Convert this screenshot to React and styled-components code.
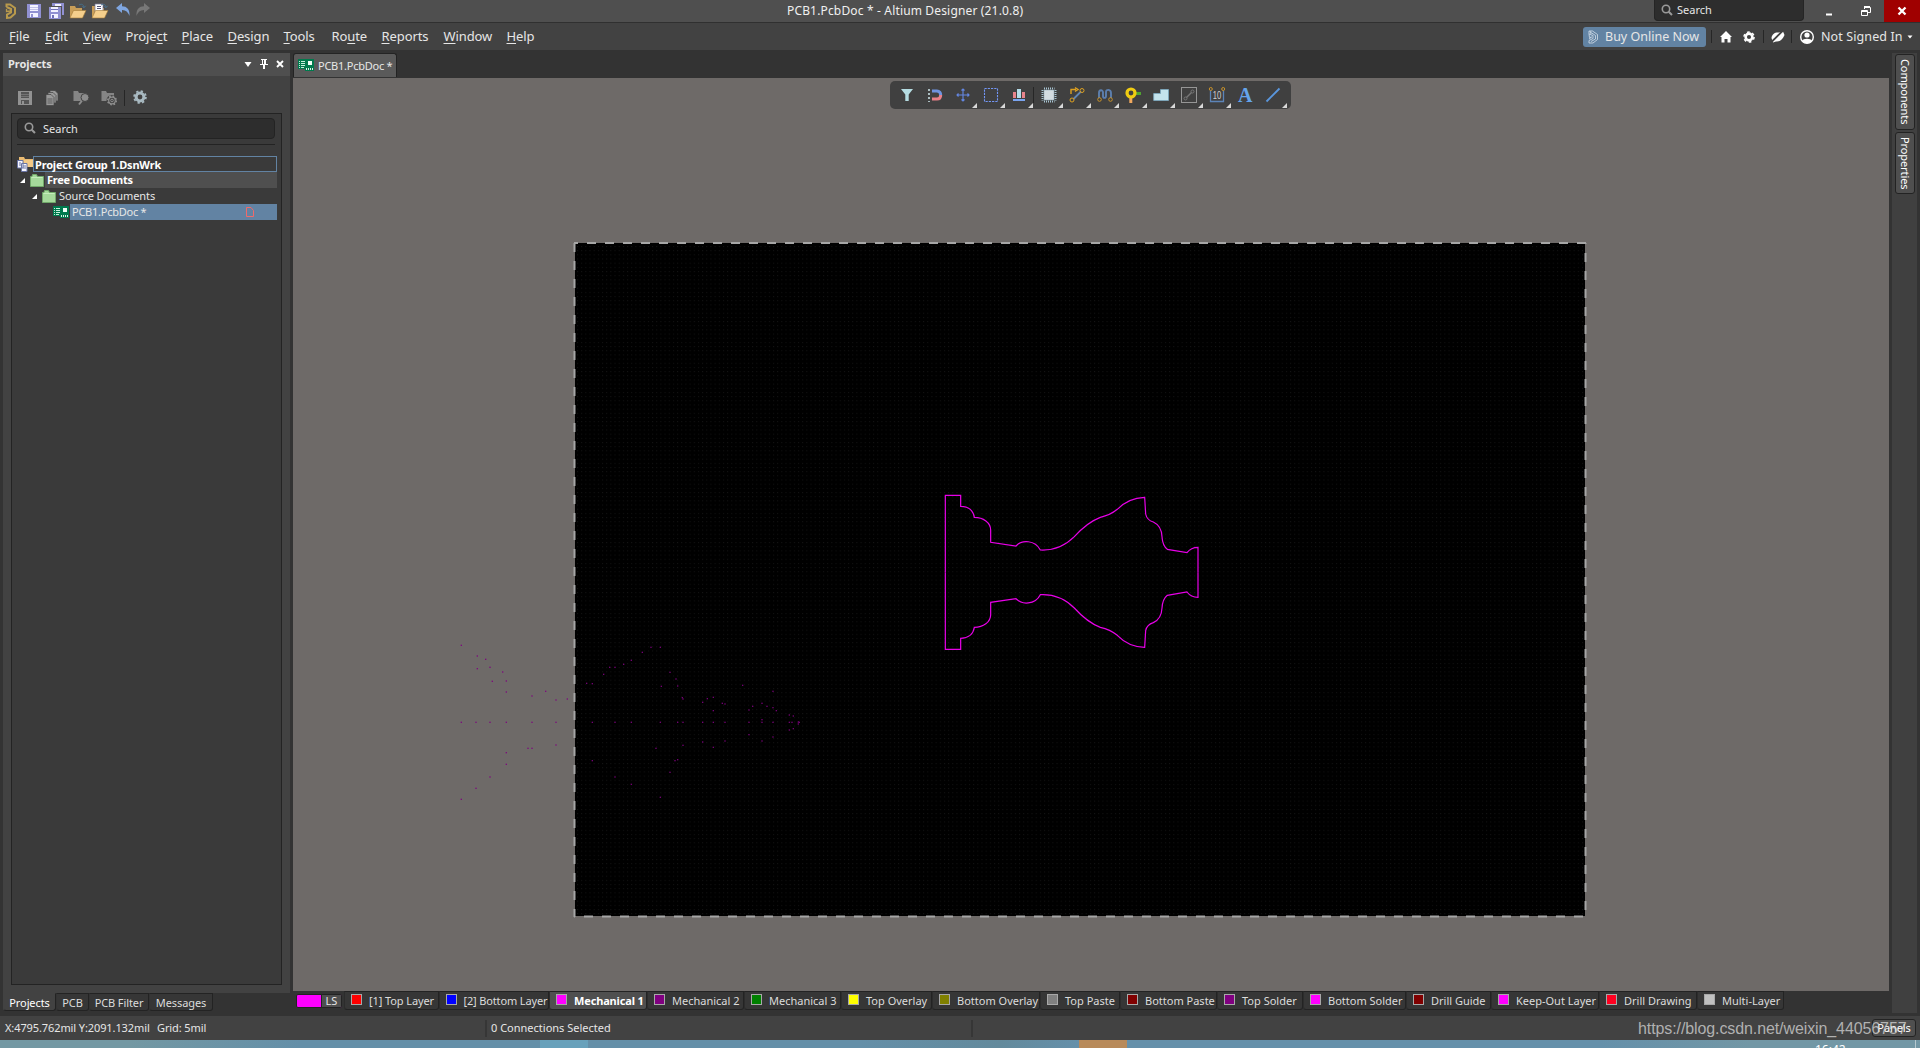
import { Fragment } from "react";
import styled, { createGlobalStyle } from "styled-components";

const GlobalStyle = createGlobalStyle`
  * {
    box-sizing: border-box;
  }
  body {
    margin: 0;
    overflow: hidden;
    background-color: #333333;
    color: #e6e6e6;
    font-family: "Noto Sans", "Open Sans", sans-serif;
    font-size: 11px;
  }
  svg {
    display: block;
    flex: none;
    overflow: visible;
  }
`;

const Window = styled.div`
  width: 1920px;
  height: 1048px;
  display: flex;
  flex-direction: column;
  overflow: hidden;
  white-space: nowrap;
`;

/* ---------- title bar ---------- */

const TitleBar = styled.div`
  height: 23px;
  flex: none;
  display: grid;
  grid-template-columns: 787px 1fr 266px;
  background-color: #4f4f4f;
  border-bottom: 1px solid #303030;
`;

const QuickAccess = styled.div`
  display: flex;
  align-items: center;
`;

const WindowTitle = styled.div`
  font-size: 12px;
  line-height: 22px;
  letter-spacing: 0.16px;
  color: #f0f0f0;
`;

const WindowControls = styled.div`
  display: flex;
`;

const TopSearch = styled.div`
  width: 150px;
  height: 21px;
  display: flex;
  align-items: center;
  gap: 4px;
  padding-left: 6px;
  padding-bottom: 1px;
  background-color: #2d2d2d;
  border: 1px solid #252525;
  border-top: none;
  border-radius: 0 0 4px 4px;
`;

const ControlButton = styled.div`
  width: ${props => props.$w}px;
  height: 22px;
  margin-left: ${props => props.$ml || 0}px;
  display: flex;
  align-items: center;
  justify-content: center;
  background-color: ${props => props.$danger ? "#a00000" : "transparent"};
`;

/* ---------- menu ---------- */

const MenuBar = styled.div`
  height: 27px;
  flex: none;
  display: flex;
  align-items: center;
  background-color: #424242;
`;

const MenuItem = styled.div`
  width: ${props => props.$w}px;
  font-size: 13px;
  letter-spacing: -0.1px;
  line-height: 26px;

  u {
    text-underline-offset: 2px;
  }
`;

const Menus = styled.div`
  display: flex;
  flex: 1;
  padding-left: 9px;
  margin-top: -1px;
`;

const Account = styled.div`
  display: flex;
  align-items: center;
  width: 337px;
  font-size: 12.5px;
  letter-spacing: 0.1px;
`;

const BuyButton = styled.div`
  width: 123px;
  height: 20px;
  display: flex;
  align-items: center;
  gap: 6px;
  padding-left: 5px;
  margin-right: 5px;
  letter-spacing: 0;
  background-color: #6283a3;
  border-radius: 3px;
`;

const Divider = styled.div`
  width: 1px;
  height: ${props => props.$h || 13}px;
  flex: none;
  background-color: #262626;
`;

const IconSlot = styled.div`
  width: ${props => props.$w}px;
  flex: none;
  display: flex;
  justify-content: center;
`;

/* ---------- body ---------- */

const Body = styled.div`
  height: 966px;
  flex: none;
  display: flex;
  padding: 3px 3px 0 3px;
  background-color: #333333;
`;

const Panel = styled.div`
  width: 287px;
  margin-right: 3px;
  display: flex;
  flex-direction: column;
`;

const PanelHeader = styled.div`
  height: 23px;
  display: flex;
  align-items: center;
  padding: 0 2px 1px 5px;
  background-color: #4f4f4f;
  font-weight: 700;
  letter-spacing: -0.05px;

  span {
    flex: 1;
    margin-top: -1px;
  }
`;

const HeaderIcon = styled.div`
  width: 16px;
  display: flex;
  justify-content: center;
`;

const PanelBody = styled.div`
  height: 917px;
  padding: 8px 8px 0 8px;
  background-color: #424242;
`;

const PanelTools = styled.div`
  height: 29px;
  display: flex;
  align-items: flex-start;
  padding: 6px 0 0 6px;
`;

const PanelTool = styled.div`
  width: ${props => props.$w || 28}px;
  display: flex;
`;

const TreeBox = styled.div`
  width: 271px;
  height: 872px;
  padding: 4px 4px 4px 5px;
  background-color: #3a3a3a;
  border: 1px solid #232323;
`;

const PanelSearch = styled.div`
  width: 258px;
  height: 21px;
  display: flex;
  align-items: center;
  gap: 7px;
  padding-left: 6px;
  padding-bottom: 1px;
  background-color: #2d2d2d;
  border: 1px solid #232323;
  border-radius: 4px;
`;

const Rule = styled.div`
  width: 258px;
  height: 1px;
  margin: 5px 0 11px;
  background-color: #232323;
`;

const TreeRow = styled.div`
  height: 16px;
  display: flex;
  align-items: center;
  padding-left: ${props => props.$indent}px;
`;

const TreeLabel = styled.div`
  flex: 1;
  height: 16px;
  display: flex;
  align-items: center;
  justify-content: space-between;
  padding-left: 2px;
  padding-right: 23px;
  padding-bottom: 1px;
  margin-left: 1px;
  font-weight: ${props => props.$bold ? 700 : 400};
  letter-spacing: ${props => props.$spacing || "-0.2px"};
  color: ${props => props.$bold ? "#ffffff" : "#e6e6e6"};
  background-color: ${props => props.$bg || "transparent"};
  ${props => props.$outlined && "border: 1px solid #6283a3; padding: 0 0 0 1px; margin-left: 0;"}
`;

const PanelTabs = styled.div`
  display: flex;
`;

const PanelTab = styled.div`
  width: ${props => props.$w}px;
  height: 18px;
  text-align: center;
  line-height: 17px;
  letter-spacing: -0.1px;
  border: 1px solid #232323;
  border-top-color: ${props => props.$active ? "#424242" : "#232323"};
  border-left-color: ${props => props.$active ? "#424242" : "#333333"};
  border-radius: 0 0 3px 3px;
  color: ${props => props.$active ? "#ffffff" : "#dcdcdc"};
  background-color: ${props => props.$active ? "#424242" : "#363636"};
`;

/* ---------- editor ---------- */

const Editor = styled.div`
  width: 1596px;
  display: flex;
  flex-direction: column;
`;

const DocumentTab = styled.div`
  width: 104px;
  height: 24px;
  margin-bottom: 1px;
  display: flex;
  align-items: center;
  gap: 4px;
  padding-left: 4px;
  padding-bottom: 1px;
  letter-spacing: -0.25px;
  background-color: #5a5a5a;
  border: 1px solid #232323;
  border-bottom: none;
  border-radius: 3px 3px 0 0;
`;

const Canvas = styled.div`
  position: relative;
  height: 913px;
  background-color: #6e6a68;
`;

const Toolbar = styled.div`
  position: absolute;
  left: 597px;
  top: 3px;
  width: 401px;
  height: 28px;
  display: flex;
  align-items: center;
  padding-left: 3px;
  background-color: #404040;
  border-radius: 5px;
`;

const ToolSlot = styled.div`
  position: relative;
  width: 28.1px;
  height: 28px;
  display: flex;
  align-items: center;
  justify-content: center;
  padding-bottom: 1px;

  ${props => props.$menu && `
    &::after {
      content: "";
      position: absolute;
      right: 0;
      bottom: 1px;
      border-left: 5px solid transparent;
      border-bottom: 5px solid #d8d8d8;
    }
  `}
`;

const TextGlyph = styled.div`
  font-family: "Liberation Serif", "Times New Roman", serif;
  font-size: 20px;
  font-weight: 700;
  line-height: 22px;
  color: #64a4ea;
`;

const LayerBar = styled.div`
  display: flex;
  height: 19px;
  padding-left: 3px;
`;

const LayerSet = styled.div`
  width: 46px;
  height: 14px;
  margin: 3px 2px 0 0;
  display: flex;
  border: 1px solid #232323;
  background-color: #ff00ff;
  border-radius: 2px;
`;

const LayerSetLabel = styled.div`
  margin-left: auto;
  width: 20px;
  text-align: center;
  line-height: 12px;
  border-left: 1px solid #232323;
  background-color: #4f4f4f;
`;

const LayerTab = styled.div`
  width: ${props => props.$w}px;
  height: 19px;
  display: flex;
  align-items: center;
  padding: 0 0 1px 6px;
  border: 1px solid #232323;
  border-left-color: #2c2c2c;
  border-radius: 0 0 3px 3px;
  font-weight: ${props => props.$active ? 700 : 400};
  letter-spacing: ${props => props.$spacing || "0"};
  color: ${props => props.$active ? "#ffffff" : "#dcdcdc"};
  background-color: ${props => props.$active ? "#4f4f4f" : "#363636"};
`;

const Swatch = styled.div`
  width: 11px;
  height: 11px;
  margin: 0 7px 2px 0;
  border: 1px solid #a8a8a8;
  background-color: ${props => props.$color};
`;

const SideDock = styled.div`
  width: 25px;
  height: 960px;
  margin-left: 3px;
  padding: 1px 0 0 3px;
  display: flex;
  flex-direction: column;
  gap: 2px;
  background-color: #404040;
`;

const SideTab = styled.div`
  width: 20px;
  height: ${props => props.$h}px;
  display: flex;
  align-items: center;
  justify-content: center;
  writing-mode: vertical-rl;
  line-height: 18px;
  letter-spacing: ${props => props.$spacing};
  color: #ffffff;
  background-color: #4f4f4f;
  border: 1px solid #232323;
  border-radius: 3px;
`;

/* ---------- status and taskbar ---------- */

const StatusBar = styled.div`
  position: relative;
  height: 24px;
  flex: none;
  display: flex;
  align-items: center;
  padding: 0 4px 0 5px;
  letter-spacing: -0.1px;
  background-color: #424242;
`;

const StatusCell = styled.div`
  width: ${props => props.$w}px;
  padding-bottom: 1px;
  padding-left: ${props => props.$pl || 0}px;
  letter-spacing: ${props => props.$spacing || "-0.1px"};
`;

const StatusRule = styled.div`
  width: 2px;
  height: 17px;
  background-color: #363636;
`;

const PanelsButton = styled.div`
  width: 44px;
  height: 18px;
  margin-left: auto;
  text-align: center;
  line-height: 16px;
  color: #ffffff;
  background-color: #4f4f4f;
  border: 1px solid #232323;
  border-radius: 3px;
`;

const Watermark = styled.div`
  position: absolute;
  left: 1638px;
  top: 2px;
  font-family: "Liberation Sans", Arial, sans-serif;
  font-size: 16px;
  line-height: 22px;
  color: rgba(215, 215, 215, 0.75);
`;

const TaskBar = styled.div`
  height: 8px;
  flex: none;
  display: flex;
  overflow: hidden;
  background: linear-gradient(90deg, #7398a3 0, #7398a3 130px, #648fa8 300px, #648fa8 860px, #638a9c 1000px, #6590aa 1080px, #6590aa 1600px, #7297a5 1750px, #7297a5 100%);
`;

const TaskItem = styled.div`
  width: 48px;
  height: 8px;
  margin-left: ${props => props.$ml}px;
  background-color: ${props => props.$color};
`;

const Clock = styled.div`
  width: 101px;
  height: 8px;
  margin-left: 688px;
  padding-top: 2px;
  font-size: 12px;
  line-height: 16px;
  color: #ffffff;
  border-right: 1px solid #b5c8cf;
`;

/* ---------- icons ---------- */

const SearchIcon = () => (
  <svg width="12" height="12" viewBox="0 0 12 12" fill="none" stroke="#9a9a9a">
    <circle cx="5" cy="5" r="3.7" strokeWidth="1.6" />
    <path d="M7.7 7.7 L11 11" strokeWidth="2" />
  </svg>
);

const AltiumIcon = () => (
  <svg width="12" height="16" viewBox="0 0 12 16" fill="none" stroke="#b99a4c" strokeWidth="2">
    <path d="M1.500 4V1.500H5L10 5V10.500L5.500 14.500L2 14.800V11.500L6 9.500V6L1.500 4" />
    <path d="M1.500 6V8.500L6 8" strokeWidth="1.300" />
  </svg>
);

const SaveIcon = ({ color = "#9191d2", paper = "#f3f3ff", size = 16 }) => (
  <svg width={size} height={size} viewBox="0 0 16 16" shapeRendering="crispEdges">
    <path d="M1 1H15V15H1Z" fill={color} />
    <path d="M4 2H12V8H4Z" fill={paper} />
    <path d="M4 4H12V5H4ZM4 6H12V7H4Z" fill={color} opacity="0.5" />
    <path d="M4 10H12V14H4Z" fill={paper} />
    <path d="M5 11H7V14H5Z" fill={color} />
  </svg>
);

const SaveAllIcon = () => (
  <svg width="18" height="18" viewBox="0 0 18 18" shapeRendering="crispEdges">
    <path d="M5 1H17V13H5Z" fill="#9191d2" />
    <path d="M8 2H14V4H8Z" fill="#f3f3ff" />
    <path d="M1 4H14V17H1Z" fill="#9191d2" stroke="#4f4f4f" />
    <path d="M4 5H11V10H4ZM4 12H11V16H4Z" fill="#f3f3ff" />
    <path d="M4 7H11V8H4ZM5 13H7V16H5Z" fill="#7070b8" />
  </svg>
);

const OpenIcon = ({ doc }) => (
  <svg width="18" height="16" viewBox="0 0 18 16">
    <path d="M1 14V3H6L7 5H13V14Z" fill="#c99e58" />
    {doc && <path d="M4 1H12V11H4Z" fill="#ffffff" stroke="#7a7a9a" strokeWidth="0.700" />}
    {doc && <path d="M6 3.500H10M6 5.500H10" stroke="#555577" />}
    <path d="M1 15L4.500 7.500H17L13.500 15Z" fill="#f5cf8c" stroke="#a57b35" strokeWidth="0.600" />
    <path d="M10 2C12.500 0.500 14.500 1.500 15 4M13.300 3.200L15 4.800L16.600 2.800" fill="none" stroke="#47708c" />
  </svg>
);

const ArrowIcon = ({ color, flip }) => (
  <svg width="20" height="18" viewBox="0 0 20 18">
    <path
      d="M3 6L9 1V4.200C14 4.200 17 7.500 16.500 14C15 10 13 8.200 9 8V11Z"
      fill={color}
      transform={flip ? "translate(20 0) scale(-1 1)" : undefined}
    />
  </svg>
);

const PcbIcon = () => (
  <svg width="16" height="12" viewBox="0 0 16 12" shapeRendering="crispEdges">
    <path d="M0 0H16V12H7V10H0Z" fill="#007a4d" />
    <path d="M1 2H2V3H1ZM1 4H2V5H1ZM1 6H2V7H1ZM1 8H2V9H1ZM3 2H7V3H3ZM3 4H7V5H3ZM3 6H7V7H3ZM3 8H6V9H3Z" fill="#c6eedb" />
    <path d="M10 2H14V6H10Z" fill="#f2fff8" />
    <path d="M8 9H9V11H8ZM10 9H11V11H10ZM12 9H13V11H12ZM14 9H15V11H14Z" fill="#d9f5e7" />
  </svg>
);

const DocsIcon = () => (
  <svg width="14" height="16" viewBox="0 0 14 16" fill="#9a9a9a" stroke="#424242" strokeWidth="0.700">
    <path d="M5 0.500H10L13 3.500V11H5Z" />
    <path d="M3 2.500H8L11 5.500V13H3Z" />
    <path d="M1 4.500H6L9 7.500V15.500H1Z" />
    <path d="M2.500 9H7.500M2.500 11H7.500M2.500 13H7.500" />
  </svg>
);

const FolderToolIcon = ({ gear }) => (
  <svg width="17" height="16" viewBox="0 0 17 16">
    <path d="M0.500 1H5L6 3H13V11H0.500Z" fill="#858585" />
    {gear ? (
      <g fill="none" stroke="#8f8f8f">
        <circle cx="11" cy="10.500" r="4.500" fill="#424242" stroke="#424242" strokeWidth="2" />
        <circle cx="11" cy="10.500" r="4.300" strokeWidth="1.500" strokeDasharray="1.700 1.677" />
        <circle cx="11" cy="10.500" r="3.300" strokeWidth="1.200" />
        <circle cx="11" cy="10.500" r="1.300" />
      </g>
    ) : (
      <g stroke="#424242">
        <path d="M9.500 10L6 14.500" stroke="#8d8d8d" strokeWidth="2" />
        <circle cx="12" cy="7.500" r="4" fill="#8d8d8d" />
      </g>
    )}
  </svg>
);

const GearIcon = ({ size, color, hole }) => (
  <svg width={size} height={size} viewBox="0 0 14 14" fill="none" stroke={color}>
    <circle cx="7" cy="7" r="3.900" strokeWidth="3" />
    <circle cx="7" cy="7" r="5.900" strokeWidth="1.800" strokeDasharray={hole ? "2.300 2.333" : "3.100 3.080"} />
  </svg>
);

const GroupIcon = () => (
  <svg width="16" height="16" viewBox="0 0 16 16">
    <path d="M2 1H7L8 3H16V11H2Z" fill="#e9ba72" />
    <path d="M7 4H16V11H7Z" fill="#f3c986" />
    <path d="M0.500 4.500H6V12H0.500ZM4.500 7.500H10V15.500H4.500Z" fill="#f6f6ff" stroke="#6a75a5" />
    <path d="M6 10H9M6 12H9M2 7H4M2 9H4" stroke="#6a75a5" />
  </svg>
);

const FolderIcon = () => (
  <svg width="14" height="13" viewBox="0 0 14 13">
    <path d="M0.500 12.500V2.500H2L2.500 0.500H6.500L7.500 2.500H13.500V12.500Z" fill="#a5d99b" stroke="#71a96a" />
    <path d="M1.500 3.500H12.500" stroke="#c4edbb" />
  </svg>
);

const Expander = styled.div`
  border-left: 5px solid transparent;
  border-bottom: 5px solid #ffffff;
  margin-right: 5px;
`;

const ModifiedIcon = () => (
  <svg width="8" height="10" viewBox="0 0 8 10" fill="none" stroke="#f06a6a">
    <path d="M0.500 0.500H5L7.500 3.500V9.500H0.500Z" />
  </svg>
);

const toolIcons = [
  { id: "filter", art: <path d="M2 2H14L9.700 7.500V14H6.300V7.500Z" fill="#b5dce2" /> },
  {
    id: "snap",
    art: (
      <g fill="none" strokeWidth="3">
        <path d="M5 4H10C12.500 4 13.700 6 13.700 8" stroke="#6f93e0" />
        <path d="M13.700 8C13.700 10.500 12.500 12 10 12H5" stroke="#e88088" />
        <path d="M2 2V15" stroke="#b8cdd0" strokeWidth="1.800" strokeDasharray="2 2" />
      </g>
    ),
  },
  { id: "origin", menu: true, art: <path d="M8 2V14M2 8H14M6.500 3.500L8 2L9.500 3.500M6.500 12.500L8 14L9.500 12.500M3.500 6.500L2 8L3.500 9.500M12.500 6.500L14 8L12.500 9.500" fill="none" stroke="#6488e4" strokeWidth="1.100" /> },
  { id: "select", menu: true, art: <rect x="1.500" y="1.500" width="13" height="13" fill="none" stroke="#7396f5" strokeWidth="1.100" strokeDasharray="2.200 1.050" /> },
  {
    id: "align",
    menu: true,
    art: (
      <g shapeRendering="crispEdges">
        <path d="M2 5H5V11H2ZM11 5H14V11H11Z" fill="#e8838b" />
        <path d="M6 2H10V11H6Z" fill="#b5dce8" />
        <path d="M2 12H14V14H2Z" fill="#7aa4f0" />
      </g>
    ),
  },
  {
    id: "part",
    menu: true,
    sep: true,
    art: (
      <g>
        <path d="M3 1.500H13.500M3 14.500H13.500" stroke="#a9c5d3" strokeWidth="2" strokeDasharray="1 1" />
        <path d="M1.500 3V13.500M14.500 3V13.500" stroke="#a9c5d3" strokeWidth="2" strokeDasharray="1 1" />
        <rect x="3" y="3" width="10" height="10" fill="#d3dce1" stroke="#8aa7b7" strokeWidth="0.500" />
      </g>
    ),
  },
  {
    id: "route",
    menu: true,
    art: (
      <g fill="none">
        <path d="M4.500 12L12 4.500" stroke="#6286b4" strokeWidth="1.800" />
        <path d="M2 7V2.500H7M6 0.500L9 2.500L6 4.500" stroke="#dda020" strokeWidth="1.400" />
        <circle cx="13" cy="3.500" r="2" stroke="#dda020" />
        <circle cx="3" cy="13" r="2" stroke="#dda020" />
      </g>
    ),
  },
  {
    id: "tuning",
    menu: true,
    art: (
      <g fill="none">
        <path d="M2 11V6C2 2.500 6 2.500 6 5.500V9C6 11.500 9 11.500 9 9V5C9 2 14 2 14 6V11" stroke="#5c7fae" strokeWidth="1.900" />
        <circle cx="2.500" cy="12.500" r="1.800" stroke="#c8922a" />
        <circle cx="13.500" cy="12.500" r="1.800" stroke="#c8922a" />
      </g>
    ),
  },
  {
    id: "via",
    menu: true,
    art: (
      <g fill="none">
        <path d="M10 6.500H16" stroke="#4fa330" strokeWidth="3" />
        <path d="M5.800 10V16" stroke="#f0a85e" strokeWidth="3" />
        <circle cx="6" cy="6" r="4" stroke="#f0cc12" strokeWidth="3.200" />
      </g>
    ),
  },
  { id: "polygon", menu: true, art: <path d="M0.700 6.500H7.500V2.500H15.500V13.500H0.700Z" fill="#c3e3ec" stroke="#7ca9c0" strokeWidth="0.800" /> },
  {
    id: "ruler",
    menu: true,
    art: (
      <g fill="none" stroke="#777777">
        <rect x="0.500" y="0.500" width="15" height="15" stroke="#969696" />
        <path d="M5.500 10.500L10.500 5.500" strokeWidth="1.400" />
        <circle cx="11.500" cy="4.500" r="1.500" />
        <circle cx="4.500" cy="11.500" r="1.500" />
      </g>
    ),
  },
  {
    id: "dimension",
    menu: true,
    art: (
      <g fill="none">
        <path d="M1.500 3.500V14.500H14.500V3.500" stroke="#5c84b8" strokeWidth="1.300" />
        <circle cx="1.800" cy="2" r="1.500" stroke="#c8922a" />
        <circle cx="14.200" cy="2" r="1.500" stroke="#c8922a" />
        <text x="8" y="12" fontSize="10.500" textAnchor="middle" fill="#d0d0d0" fontFamily="Liberation Sans, sans-serif" textLength="8.500" lengthAdjust="spacingAndGlyphs">10</text>
      </g>
    ),
  },
  { id: "text", glyph: "A" },
  { id: "line", menu: true, art: <path d="M1.500 14.500L14.500 1.500" stroke="#5a97de" strokeWidth="1.900" /> },
];

/* ---------- data ---------- */

const menus = [
  { pre: "", key: "F", post: "ile", w: 36 },
  { pre: "", key: "E", post: "dit", w: 38 },
  { pre: "", key: "V", post: "iew", w: 42.5 },
  { pre: "Proje", key: "c", post: "t", w: 56 },
  { pre: "", key: "P", post: "lace", w: 46 },
  { pre: "", key: "D", post: "esign", w: 56 },
  { pre: "", key: "T", post: "ools", w: 48 },
  { pre: "Ro", key: "u", post: "te", w: 50 },
  { pre: "", key: "R", post: "eports", w: 62 },
  { pre: "", key: "W", post: "indow", w: 63 },
  { pre: "", key: "H", post: "elp", w: 40 },
];

const layers = [
  { name: "[1] Top Layer", color: "#ff0000", w: 94.5, spacing: "-0.1px" },
  { name: "[2] Bottom Layer", color: "#0000ff", w: 110.5, spacing: "-0.15px" },
  { name: "Mechanical 1", color: "#ff00ff", w: 98, active: true, spacing: "-0.15px" },
  { name: "Mechanical 2", color: "#800080", w: 97 },
  { name: "Mechanical 3", color: "#008000", w: 97 },
  { name: "Top Overlay", color: "#ffff00", w: 91 },
  { name: "Bottom Overlay", color: "#808000", w: 108 },
  { name: "Top Paste", color: "#808080", w: 80 },
  { name: "Bottom Paste", color: "#800000", w: 97 },
  { name: "Top Solder", color: "#800080", w: 86 },
  { name: "Bottom Solder", color: "#ff00ff", w: 103 },
  { name: "Drill Guide", color: "#800000", w: 85 },
  { name: "Keep-Out Layer", color: "#ff00ff", w: 108 },
  { name: "Drill Drawing", color: "#ff0020", w: 98 },
  { name: "Multi-Layer", color: "#c0c0c0", w: 87 },
];

// leftover primitives of the imported drawing, in thirds of a pixel
const strayPoints = [
  [64, 76], [112, 108], [137, 118], [112, 146], [150, 142], [188, 156], [157, 184], [199, 183], [199, 216],
  [317, 214], [276, 228], [348, 240], [382, 237], [64, 307], [108, 307], [150, 307], [199, 307], [276, 307],
  [348, 307], [348, 375], [264, 385], [276, 385], [199, 398], [199, 433], [150, 471], [108, 505], [64, 538],
  [440, 190], [457, 191], [491, 163], [509, 142], [525, 142], [551, 133], [574, 121], [607, 97], [633, 82],
  [661, 82], [690, 157], [708, 177], [713, 198], [664, 199], [727, 233], [729, 237], [788, 247], [802, 236],
  [820, 232], [847, 250], [855, 252], [820, 272], [908, 196], [999, 214], [966, 250], [938, 259], [927, 270],
  [981, 259], [999, 263], [1009, 272], [966, 299], [1048, 285], [1060, 288], [1048, 307], [1056, 307],
  [1075, 306], [1078, 307], [1075, 312], [1048, 330], [1060, 326], [457, 307], [525, 307], [574, 307],
  [661, 307], [713, 307], [729, 307], [788, 307], [820, 307], [855, 307], [927, 307], [966, 307], [999, 307],
  [927, 344], [966, 363], [999, 351], [788, 366], [855, 363], [820, 382], [729, 376], [648, 385], [713, 419],
  [705, 422], [690, 457], [457, 422], [525, 471], [574, 493], [661, 532],
];

const halfOutline =
  "M76 307V76H122V109C145 109 160 122 163 142C190 142 212 158 212 180V217L288 228" +
  "C305 209 345 209 361 240C400 242 435 228 463 200C490 170 520 150 541 142" +
  "C560 138 575 132 592 118C615 94 645 83 674 82L677 132C680 147 690 153 700 156" +
  "C715 163 725 178 726 200C727 215 732 230 742 238L801 248C810 236 822 232 834 232V307";

const Drawing = () => (
  <svg width="1596" height="913" viewBox="293 78 1596 913">
    <defs>
      <pattern id="grid" x="577" y="246" width="4.17" height="4.17" patternUnits="userSpaceOnUse">
        <rect width="1" height="1" fill="#141414" />
      </pattern>
    </defs>
    <rect x="575" y="243" width="1010" height="673" fill="#000000" />
    <rect x="575" y="243" width="1010" height="673" fill="url(#grid)" />
    <g stroke="#a6a6a6" strokeWidth="2" strokeDasharray="9 9">
      <path d="M574 243H1586" strokeDashoffset="5" />
      <path d="M574 916.500H1586" strokeDashoffset="8" />
      <path d="M574.500 243V917" />
      <path d="M1585.500 243V917" strokeDashoffset="8" />
    </g>
    <g transform="translate(920 470) scale(0.33333)" fill="none" stroke="#e800e8" strokeWidth="3.600">
      <path d={halfOutline} />
      <path d={halfOutline} transform="translate(0 614) scale(1 -1)" />
    </g>
    <g transform="translate(440 620) scale(0.33333)" fill="#800080" opacity="0.9">
      {strayPoints.map(([x, y]) => (
        <rect key={`${x}-${y}`} x={x - 2} y={y - 2} width="4" height="4" />
      ))}
    </g>
  </svg>
);

const App = () => {
  return (
    <>
      <GlobalStyle />
      <Window>
        <TitleBar>
          <QuickAccess>
            <IconSlot $w={21}><AltiumIcon /></IconSlot>
            <IconSlot $w={26}><SaveIcon /></IconSlot>
            <IconSlot $w={17}><SaveAllIcon /></IconSlot>
            <IconSlot $w={27}><OpenIcon /></IconSlot>
            <IconSlot $w={18}><OpenIcon doc /></IconSlot>
            <IconSlot $w={27}><ArrowIcon color="#7fa6e0" /></IconSlot>
            <IconSlot $w={14}><ArrowIcon color="#777777" flip /></IconSlot>
          </QuickAccess>
          <WindowTitle>PCB1.PcbDoc * - Altium Designer (21.0.8)</WindowTitle>
          <WindowControls>
            <TopSearch>
              <SearchIcon />
              Search
            </TopSearch>
            <ControlButton $w={36} $ml={7}>
              <svg width="8" height="10"><path d="M1 8.500H7" stroke="#ffffff" strokeWidth="2" /></svg>
            </ControlButton>
            <ControlButton $w={37}>
              <svg width="10" height="10" viewBox="0 0 10 10" fill="none" stroke="#ffffff">
                <path d="M3 1H9M0.500 5H6.500" strokeWidth="2" />
                <path d="M3.500 3V1.500H9.500V6.500H7M0.500 4.500V9.500H6.500V4.500" />
              </svg>
            </ControlButton>
            <ControlButton $w={36} $danger>
              <svg width="10" height="10"><path d="M1.500 1.500L8.500 8.500M8.500 1.500L1.500 8.500" stroke="#ffffff" strokeWidth="2.300" /></svg>
            </ControlButton>
          </WindowControls>
        </TitleBar>

        <MenuBar>
          <Menus>
            {menus.map(m => (
              <MenuItem key={m.pre + m.key + m.post} $w={m.w}>{m.pre}<u>{m.key}</u>{m.post}</MenuItem>
            ))}
          </Menus>
          <Account>
            <BuyButton>
              <svg width="11" height="14" viewBox="0 0 11 14" fill="none" stroke="#d5e0ea" strokeWidth="0.800">
                <path d="M1 4V1H4.500L9.500 4.500V9.500L5 13H1V10.500L5 8.500V5.500L1 4L1.500 7.500L4 7" />
                <path d="M3 2.500L7.500 5.500V9L3 11.500M2 1L3 4M1 9L3 7.500" />
              </svg>
              Buy Online Now
            </BuyButton>
            <Divider />
            <IconSlot $w={27}>
              <svg width="12" height="12" viewBox="0 0 12 12" fill="#ffffff"><path d="M6 0L12 6H10.500V11.500H7.500V8H4.500V11.500H1.500V6H0Z" /></svg>
            </IconSlot>
            <IconSlot $w={19}><GearIcon size={12} color="#ffffff" /></IconSlot>
            <IconSlot $w={5} />
            <Divider />
            <IconSlot $w={27}>
              <svg width="14" height="12" viewBox="0 0 14 12">
                <path d="M0.500 7C1 3 4 1 8 1.500L12 0.500L13.500 4C12 8 9 11 5 10.500L2 11.500Z" fill="#ffffff" />
                <path d="M0 11.500L12 -0.500" stroke="#424242" strokeWidth="1.800" />
              </svg>
            </IconSlot>
            <Divider />
            <IconSlot $w={29}>
              <svg width="14" height="14" viewBox="0 0 14 14">
                <circle cx="7" cy="7" r="6.300" fill="none" stroke="#ffffff" strokeWidth="1.400" />
                <circle cx="7" cy="5" r="2.600" fill="#ffffff" />
                <path d="M2 11C3 8 11 8 12 11C10 14 4 14 2 11Z" fill="#ffffff" />
              </svg>
            </IconSlot>
            Not Signed In
            <IconSlot $w={14}>
              <svg width="6" height="4"><path d="M0.500 0.500H5.500L3 3.500Z" fill="#ffffff" /></svg>
            </IconSlot>
          </Account>
        </MenuBar>

        <Body>
          <Panel>
            <PanelHeader>
              <span>Projects</span>
              <HeaderIcon><svg width="8" height="5"><path d="M0.500 0H7.500L4 5Z" fill="#ffffff" /></svg></HeaderIcon>
              <HeaderIcon>
                <svg width="8" height="10" viewBox="0 0 8 10" shapeRendering="crispEdges">
                  <path d="M1 0H7V1H1ZM2 1H3V5H2ZM4 1H6V5H4ZM0 5H8V6H0ZM3 6H5V10H3Z" fill="#ffffff" />
                </svg>
              </HeaderIcon>
              <HeaderIcon><svg width="8" height="8"><path d="M1 1L7 7M7 1L1 7" stroke="#ffffff" strokeWidth="1.900" /></svg></HeaderIcon>
            </PanelHeader>
            <PanelBody>
              <PanelTools>
                <PanelTool><SaveIcon color="#929292" paper="#555555" /></PanelTool>
                <PanelTool $w={28}><DocsIcon /></PanelTool>
                <PanelTool><FolderToolIcon /></PanelTool>
                <PanelTool $w={23}><FolderToolIcon gear /></PanelTool>
                <Divider $h={16} />
                <IconSlot $w={30}><GearIcon size={14} color="#a8b9c1" hole /></IconSlot>
              </PanelTools>
              <TreeBox>
                <PanelSearch>
                  <SearchIcon />
                  Search
                </PanelSearch>
                <Rule />
                <TreeRow $indent={0}>
                  <GroupIcon />
                  <TreeLabel $bold $outlined>Project Group 1.DsnWrk</TreeLabel>
                </TreeRow>
                <TreeRow $indent={3}>
                  <Expander />
                  <FolderIcon />
                  <TreeLabel $bold $bg="#4f4f4f" $spacing="-0.25px">Free Documents</TreeLabel>
                </TreeRow>
                <TreeRow $indent={15}>
                  <Expander />
                  <FolderIcon />
                  <TreeLabel $spacing="-0.08px">Source Documents</TreeLabel>
                </TreeRow>
                <TreeRow $indent={36}>
                  <PcbIcon />
                  <TreeLabel $bg="#6283a3" $spacing="-0.25px">PCB1.PcbDoc *<ModifiedIcon /></TreeLabel>
                </TreeRow>
              </TreeBox>
            </PanelBody>
            <PanelTabs>
              <PanelTab $w={53} $active>Projects</PanelTab>
              <PanelTab $w={33}>PCB</PanelTab>
              <PanelTab $w={60}>PCB Filter</PanelTab>
              <PanelTab $w={64}>Messages</PanelTab>
            </PanelTabs>
          </Panel>

          <Editor>
            <DocumentTab>
              <PcbIcon />
              PCB1.PcbDoc *
            </DocumentTab>
            <Canvas>
              <Drawing />
              <Toolbar>
                {toolIcons.map(tool => (
                  <Fragment key={tool.id}>
                    {tool.sep && <Divider $h={16} />}
                    <ToolSlot $menu={tool.menu}>
                      {tool.glyph
                        ? <TextGlyph>{tool.glyph}</TextGlyph>
                        : <svg width="16" height="16" viewBox="0 0 16 16">{tool.art}</svg>}
                    </ToolSlot>
                  </Fragment>
                ))}
              </Toolbar>
            </Canvas>
            <LayerBar>
              <LayerSet>
                <LayerSetLabel>LS</LayerSetLabel>
              </LayerSet>
              {layers.map(layer => (
                <LayerTab key={layer.name} $w={layer.w} $active={layer.active} $spacing={layer.spacing}>
                  <Swatch $color={layer.color} />
                  {layer.name}
                </LayerTab>
              ))}
            </LayerBar>
          </Editor>

          <SideDock>
            <SideTab $h={76} $spacing="-0.1px">Components</SideTab>
            <SideTab $h={62} $spacing="-0.1px">Properties</SideTab>
          </SideDock>
        </Body>

        <StatusBar>
          <StatusCell $w={152}>X:4795.762mil Y:2091.132mil</StatusCell>
          <StatusCell $w={328}>Grid: 5mil</StatusCell>
          <StatusRule />
          <StatusCell $w={484} $pl={4} $spacing="0">0 Connections Selected</StatusCell>
          <StatusRule />
          <PanelsButton>Panels</PanelsButton>
          <Watermark>https://blog.csdn.net/weixin_44056757</Watermark>
        </StatusBar>

        <TaskBar>
          <TaskItem $ml={540} $color="#68a1bb" />
          <TaskItem $ml={491} $color="#b88a5a" />
          <Clock>16:42</Clock>
        </TaskBar>
      </Window>
    </>
  );
};

export default App;
